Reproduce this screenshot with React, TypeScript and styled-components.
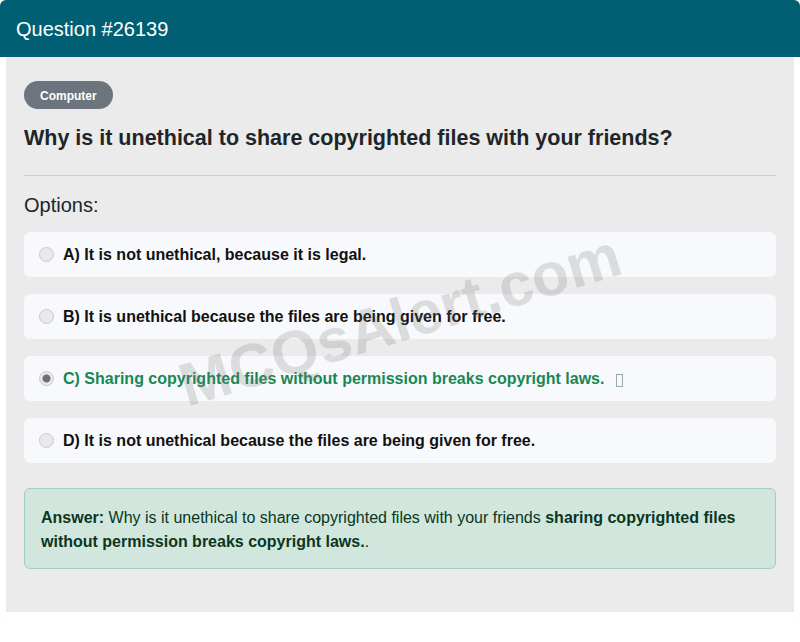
import styled, { createGlobalStyle } from "styled-components";

type Option = {
  label: string;
  text: string;
  correct?: boolean;
};

const options: Option[] = [
  { label: "A)", text: "It is not unethical, because it is legal." },
  { label: "B)", text: "It is unethical because the files are being given for free." },
  {
    label: "C)",
    text: "Sharing copyrighted files without permission breaks copyright laws.",
    correct: true,
  },
  { label: "D)", text: "It is not unethical because the files are being given for free." },
];

export default function App() {
  return (
    <>
      <GlobalStyle />
      <Card>
        <Header>Question #26139</Header>
        <Body>
          <Watermark>MCQsAlert.com</Watermark>
          <Badge>Computer</Badge>
          <Title>Why is it unethical to share copyrighted files with your friends?</Title>
          <Divider />
          <OptionsHeading>Options:</OptionsHeading>
          <OptionList>
            {options.map((o) => (
              <OptionRow key={o.label}>
                <Radio $checked={!!o.correct} />
                <OptionText $correct={!!o.correct}>
                  {o.label} {o.text}
                </OptionText>
                {o.correct && <MissingIcon />}
              </OptionRow>
            ))}
          </OptionList>
          <AnswerBox>
            <strong>Answer:</strong> Why is it unethical to share copyrighted files with your
            friends <strong>sharing copyrighted files without permission breaks copyright laws.</strong>.
          </AnswerBox>
        </Body>
        <Footer />
      </Card>
    </>
  );
}

/* styles */

const GlobalStyle = createGlobalStyle`
  html, body {
    margin: 0;
    padding: 0;
    background: #ffffff;
    font-family: "Liberation Sans", Arial, sans-serif;
  }
`;

const Card = styled.div`
  width: 800px;
  background: #ffffff;
  border-radius: 6px;
  overflow: hidden;
  box-shadow: 0 0 2px rgba(0, 0, 0, 0.08);
`;

const Header = styled.div`
  height: 57px;
  background: #005f73;
  color: #ffffff;
  font-size: 20px;
  display: flex;
  align-items: center;
  padding: 2px 16px 0;
  box-sizing: border-box;
`;

const Body = styled.div`
  position: relative;
  margin: 0 6px;
  background: #ebebeb;
  padding: 24px 18px 43px;
  overflow: hidden;
`;

const Footer = styled.div`
  height: 6px;
`;

const Watermark = styled.div`
  position: absolute;
  left: 394px;
  top: 263px;
  transform: translate(-50%, -50%) rotate(-17deg);
  font-size: 61px;
  font-weight: 700;
  color: rgba(120, 120, 120, 0.22);
  white-space: nowrap;
  pointer-events: none;
  z-index: 2;
`;

const Badge = styled.span`
  display: inline-flex;
  align-items: center;
  height: 28px;
  padding: 1px 16px 0;
  box-sizing: border-box;
  border-radius: 14px;
  background: #6c757d;
  color: #ffffff;
  font-size: 12px;
  font-weight: 700;
`;

const Title = styled.h2`
  margin: 14px 0 0;
  font-size: 21.5px;
  line-height: 30px;
  font-weight: 700;
  color: #212529;
`;

const Divider = styled.hr`
  margin: 22px 0 0;
  border: 0;
  border-top: 1px solid #cfcfcf;
`;

const OptionsHeading = styled.div`
  margin-top: 16px;
  font-size: 20px;
  line-height: 26px;
  color: #212529;
`;

const OptionList = styled.div`
  display: flex;
  flex-direction: column;
  gap: 17px;
  margin-top: 14px;
`;

const OptionRow = styled.div`
  display: flex;
  align-items: center;
  height: 45px;
  padding: 0 15px;
  background: #f8f9fc;
  border-radius: 6px;
`;

const Radio = styled.span<{ $checked: boolean }>`
  flex: none;
  width: 15px;
  height: 15px;
  box-sizing: border-box;
  border-radius: 50%;
  border: 1px solid #c9c9c9;
  background: ${({ $checked }) =>
    $checked ? "radial-gradient(circle, #6f6f6f 0 3.5px, #e9e9e9 4.5px)" : "#e9e9e9"};
  margin-right: 9px;
`;

const OptionText = styled.span<{ $correct: boolean }>`
  font-size: 16px;
  font-weight: 700;
  color: ${({ $correct }) => ($correct ? "#198754" : "#111111")};
`;

const MissingIcon = styled.span`
  display: inline-block;
  width: 5px;
  height: 11px;
  border: 1px solid #9aa;
  margin-left: 12px;
  margin-top: 4px;
`;

const AnswerBox = styled.div`
  margin-top: 25px;
  padding: 17px 16px 14px;
  background: #d1e7dd;
  border: 1px solid #a3cfbb;
  border-radius: 6px;
  color: #0a3622;
  font-size: 16px;
  line-height: 24px;

  strong {
    font-weight: 700;
  }
`;
